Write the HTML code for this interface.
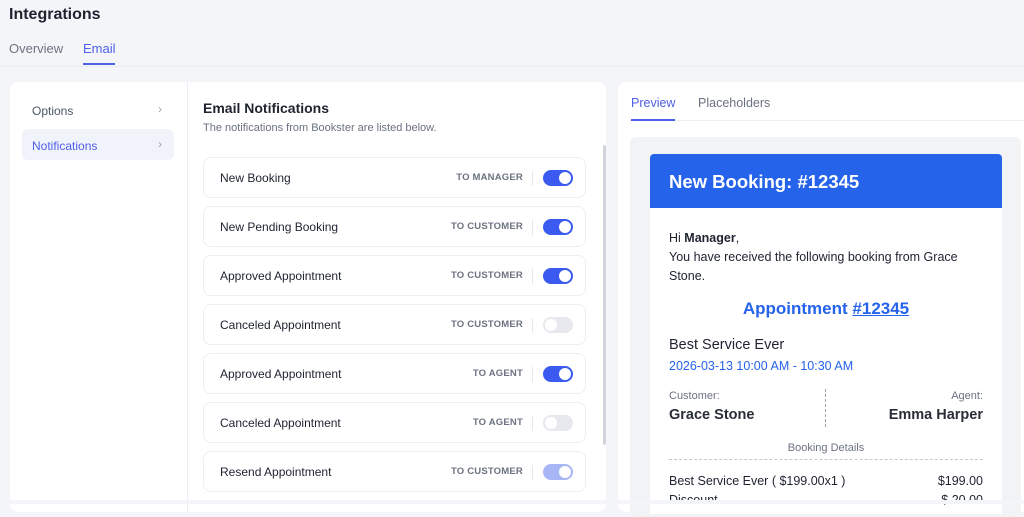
<!DOCTYPE html>
<html><head><style>
*{box-sizing:border-box;margin:0;padding:0}
body{width:1024px;height:504px;overflow:hidden;background:#f4f5f9;font-family:"Liberation Sans",sans-serif;position:relative;color:#1f2330}
.abs{position:absolute}
.row{position:absolute;left:203px;width:383px;height:41px;background:#fff;border:1px solid #eceef3;border-radius:8px}
.row .t{position:absolute;left:16px;top:13px;font-size:12px;color:#1f2330}
.row .r{position:absolute;right:62px;top:14px;font-size:9.5px;font-weight:bold;color:#6b7280;letter-spacing:.2px}
.row .d{position:absolute;right:52px;top:13px;width:1px;height:15px;background:#e5e7eb}
.tg{position:absolute;right:12px;top:12px;width:30px;height:16px;border-radius:8px;background:#3b5bf0}
.tg::after{content:"";position:absolute;right:2px;top:2px;width:12px;height:12px;border-radius:50%;background:#fff}
.tg.off{background:#e7e9ef}.tg.off::after{left:2px;right:auto}
.tg.dim{background:#a9b6f5}
</style></head><body>
<div class="abs" style="left:9px;top:6px;font-size:16px;font-weight:bold;color:#1f2330">Integrations</div>
<div class="abs" style="left:9px;top:41px;font-size:13px;color:#6b7280">Overview</div>
<div class="abs" style="left:83px;top:41px;font-size:13px;color:#4f5fe8">Email</div>
<div class="abs" style="left:83px;top:63px;width:32px;height:2px;background:#4f5fe8"></div>
<div class="abs" style="left:0;top:66px;width:1024px;height:1px;background:#eceef3"></div>

<div class="abs" style="left:10px;top:82px;width:596px;height:430px;background:#fff;border-radius:8px"></div>
<div class="abs" style="left:187px;top:82px;width:1px;height:430px;background:#eceef3"></div>
<div class="abs" style="left:32px;top:104px;font-size:12px;color:#4b5563">Options</div>
<div class="abs" style="left:158px;top:102px;font-size:12px;color:#9ca3af">›</div>
<div class="abs" style="left:22px;top:129px;width:152px;height:31px;background:#f1f3fb;border-radius:6px"></div>
<div class="abs" style="left:32px;top:139px;font-size:12px;color:#4f5fe8">Notifications</div>
<div class="abs" style="left:158px;top:137px;font-size:12px;color:#9ca3af">›</div>
<div class="abs" style="left:203px;top:100px;font-size:14px;font-weight:bold">Email Notifications</div>
<div class="abs" style="left:203px;top:122px;font-size:11px;color:#6b7280">The notifications from Bookster are listed below.</div>
<div class="abs" style="left:603px;top:145px;width:3px;height:300px;background:#d1d5db;border-radius:2px"></div>

<div class="row" style="top:157px"><span class="t">New Booking</span><span class="r">TO MANAGER</span><span class="d"></span><span class="tg"></span></div>
<div class="row" style="top:206px"><span class="t">New Pending Booking</span><span class="r">TO CUSTOMER</span><span class="d"></span><span class="tg"></span></div>
<div class="row" style="top:255px"><span class="t">Approved Appointment</span><span class="r">TO CUSTOMER</span><span class="d"></span><span class="tg"></span></div>
<div class="row" style="top:304px"><span class="t">Canceled Appointment</span><span class="r">TO CUSTOMER</span><span class="d"></span><span class="tg off"></span></div>
<div class="row" style="top:353px"><span class="t">Approved Appointment</span><span class="r">TO AGENT</span><span class="d"></span><span class="tg"></span></div>
<div class="row" style="top:402px"><span class="t">Canceled Appointment</span><span class="r">TO AGENT</span><span class="d"></span><span class="tg off"></span></div>
<div class="row" style="top:451px"><span class="t">Resend Appointment</span><span class="r">TO CUSTOMER</span><span class="d"></span><span class="tg dim"></span></div>

<div class="abs" style="left:618px;top:82px;width:420px;height:430px;background:#fff;border-radius:8px"></div>
<div class="abs" style="left:631px;top:96px;font-size:12.5px;color:#4f5fe8">Preview</div>
<div class="abs" style="left:698px;top:96px;font-size:12.5px;color:#6b7280">Placeholders</div>
<div class="abs" style="left:630px;top:120px;width:394px;height:1px;background:#eceef3"></div>
<div class="abs" style="left:631px;top:119px;width:44px;height:2px;background:#4f5fe8"></div>
<div class="abs" style="left:630px;top:137px;width:391px;height:380px;background:#f2f3f5;border-radius:6px"></div>
<div class="abs" style="left:650px;top:154px;width:352px;height:360px;background:#fff;border-radius:4px 4px 0 0"></div>
<div class="abs" style="left:650px;top:154px;width:352px;height:54px;background:#2563eb;border-radius:4px 4px 0 0"></div>
<div class="abs" style="left:669px;top:171px;font-size:18.5px;font-weight:bold;color:#fff">New Booking: #12345</div>
<div class="abs" style="left:669px;top:229px;font-size:12.5px;line-height:19px;color:#1f2330;width:320px">Hi <b>Manager</b>,<br>You have received the following booking from Grace Stone.</div>
<div class="abs" style="left:650px;top:299px;width:352px;text-align:center;font-size:17px;font-weight:bold;color:#2563eb">Appointment <u>#12345</u></div>
<div class="abs" style="left:669px;top:337px;font-size:14.5px;color:#1f2330">Best Service Ever</div>
<div class="abs" style="left:669px;top:359px;font-size:12.5px;color:#2563eb">2026-03-13 10:00 AM - 10:30 AM</div>
<div class="abs" style="left:669px;top:390px;font-size:11px;color:#6b7280">Customer:</div>
<div class="abs" style="left:669px;top:407px;font-size:14.5px;font-weight:bold;color:#2a2e38">Grace Stone</div>
<div class="abs" style="left:825px;top:389px;height:38px;border-left:1px dashed #9ca3af"></div>
<div class="abs" style="right:41px;top:390px;font-size:11px;color:#6b7280">Agent:</div>
<div class="abs" style="right:41px;top:407px;font-size:14.5px;font-weight:bold;color:#2a2e38">Emma Harper</div>
<div class="abs" style="left:669px;top:442px;width:314px;text-align:center;font-size:11px;color:#6b7280">Booking Details</div>
<div class="abs" style="left:669px;top:459px;width:314px;border-top:1px dashed #c4c8d0"></div>
<div class="abs" style="left:669px;top:474px;font-size:12.5px">Best Service Ever ( $199.00x1 )</div>
<div class="abs" style="right:41px;top:474px;font-size:12.5px">$199.00</div>
<div class="abs" style="left:669px;top:493px;font-size:12.5px">Discount</div>
<div class="abs" style="right:41px;top:493px;font-size:12.5px">-$ 20.00</div>
<div class="abs" style="left:0;top:500px;width:1024px;height:4px;background:#f4f5f9"></div>
</body></html>
